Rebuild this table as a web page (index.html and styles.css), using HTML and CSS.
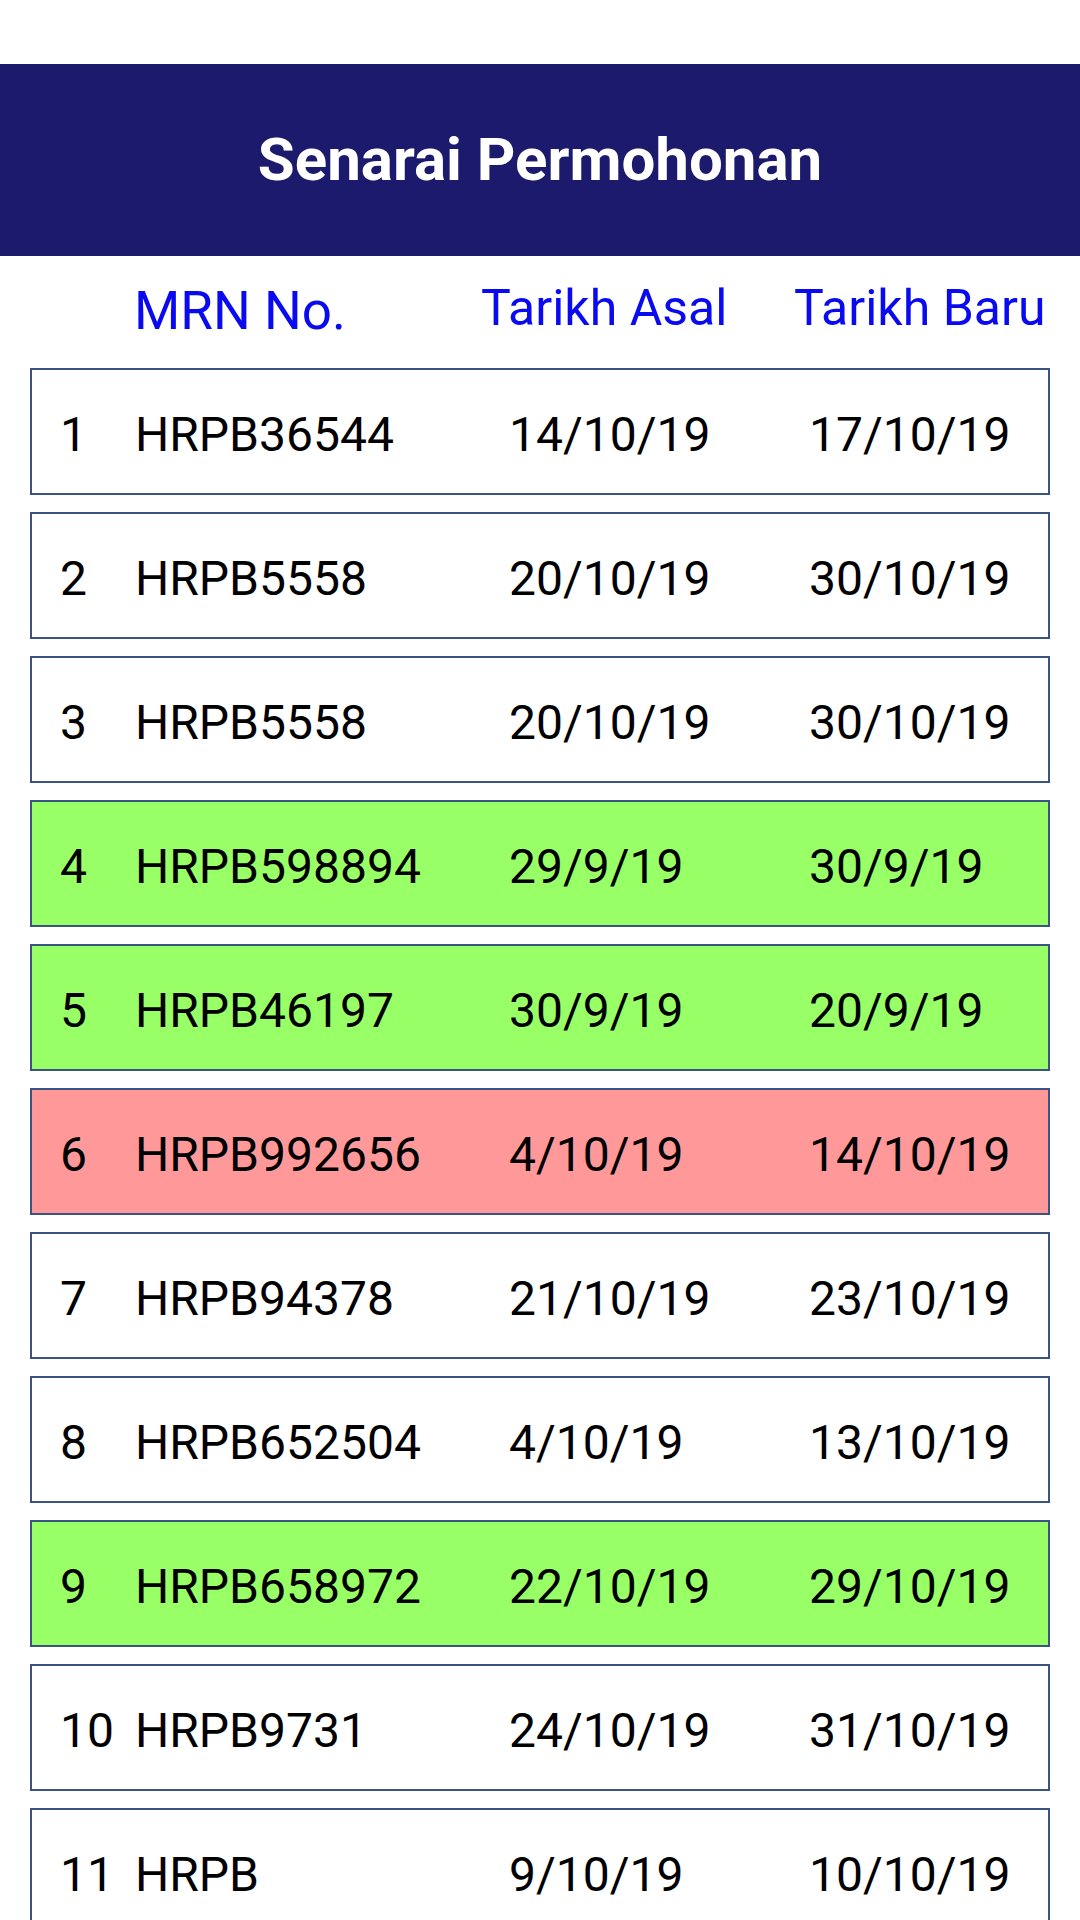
FILE: index.html
```html
<!DOCTYPE html>
<html>
<head>
  <meta charset="UTF-8">
  <title>Senarai Permohonan</title>
  <link rel="stylesheet" href="styles.css">
</head>
<body>
  <div class="top-bar">
    <h1>Senarai Permohonan</h1>
  </div>

  <div class="cols">
    <span></span>
    <span class="col-mrn">MRN No.</span>
    <span>Tarikh Asal</span>
    <span>Tarikh Baru</span>
  </div>

  <div class="list">
    <div class="row"><span>1</span><span>HRPB36544</span><span>14/10/19</span><span>17/10/19</span></div>
    <div class="row"><span>2</span><span>HRPB5558</span><span>20/10/19</span><span>30/10/19</span></div>
    <div class="row"><span>3</span><span>HRPB5558</span><span>20/10/19</span><span>30/10/19</span></div>
    <div class="row green"><span>4</span><span>HRPB598894</span><span>29/9/19</span><span>30/9/19</span></div>
    <div class="row green"><span>5</span><span>HRPB46197</span><span>30/9/19</span><span>20/9/19</span></div>
    <div class="row red"><span>6</span><span>HRPB992656</span><span>4/10/19</span><span>14/10/19</span></div>
    <div class="row"><span>7</span><span>HRPB94378</span><span>21/10/19</span><span>23/10/19</span></div>
    <div class="row"><span>8</span><span>HRPB652504</span><span>4/10/19</span><span>13/10/19</span></div>
    <div class="row green"><span>9</span><span>HRPB658972</span><span>22/10/19</span><span>29/10/19</span></div>
    <div class="row"><span>10</span><span>HRPB9731</span><span>24/10/19</span><span>31/10/19</span></div>
    <div class="row"><span>11</span><span>HRPB</span><span>9/10/19</span><span>10/10/19</span></div>
  </div>
</body>
</html>
```

FILE: styles.css
```css
body { margin: 0; font-family: Roboto, 'Noto Sans', Arial, sans-serif; color: #000; background: #fff; }

/* --- HEADER --- */
.top-bar {
  margin-top: 64px;
  height: 192px;
  background: #1b1a6c;
  display: flex;
  align-items: center;
  justify-content: center;
}
.top-bar h1 {
  margin: 0;
  color: #fff;
  font-size: 60px;
  font-weight: bold;
  line-height: 1;
}

/* --- COLUMN TITLES --- */
.cols {
  height: 112px;
  box-sizing: border-box;
  padding-top: 27px;
  display: grid;
  grid-template-columns: 134px 347px 313px auto;
  align-items: start;
  color: #0a0af0;
  font-size: 50px;
  line-height: 1;
}
.cols .col-mrn { font-size: 53px; padding-top: 2px; }

/* --- LIST --- */
.list {
  display: flex;
  flex-direction: column;
  gap: 17px;
  padding: 0 30px;
}
.row {
  display: grid;
  grid-template-columns: 75px 374px 300px auto;
  border: 2px solid #3a5384;
  padding: 41px 0 34px 28px;
  font-size: 48px;
  line-height: 1;
  background: #fff;
}
.row.green { background: #99ff66; }
.row.red { background: #ff9999; }
```
